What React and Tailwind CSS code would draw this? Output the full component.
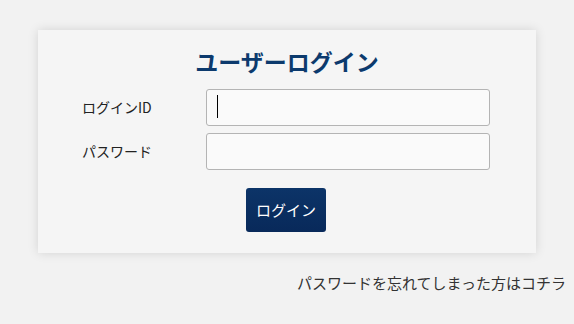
import React from "react";

const jp = { fontFamily: '"Noto Sans CJK JP", "Noto Sans", sans-serif' };

const Field = ({ label, type = "text", caret }) => (
  <div className="flex items-center">
    <label className="w-[124px] text-[14px] text-[#222]">{label}</label>
    <div className="relative flex-1">
      <input
        type={type}
        className="w-full h-[37px] px-[10px] rounded-[3px] border border-[#b4b4b4] bg-[#fafafa] outline-none text-[15px] text-black"
      />
      {caret && <span className="absolute left-[11px] top-[6px] h-[23px] w-px bg-black" />}
    </div>
  </div>
);

export default function App() {
  return (
    <div className="min-h-[324px] bg-[#f2f2f2] pt-[30px]" style={jp}>
      <div className="mx-[38px] bg-[#f5f5f5] shadow-[0_0_10px_rgba(0,0,0,0.13)] pt-[15px] pb-[21px]">
        <h1 className="text-center text-[23px] leading-[32px] font-bold text-[#0c3a6d]">
          ユーザーログイン
        </h1>
        <form className="mt-[12px] pl-[44px] pr-[46px] flex flex-col gap-[7px]">
          <Field label="ログインID" caret />
          <Field label="パスワード" type="password" />
          <div className="flex justify-center mt-[11px]">
            <button
              type="button"
              className="h-[44px] px-[10px] rounded-[3px] bg-gradient-to-b from-[#0c3468] to-[#08295a] text-white text-[15px]"
            >
              ログイン
            </button>
          </div>
        </form>
      </div>
      <div className="flex justify-end pr-[8px] mt-[19px]">
        <a href="#" className="text-[15px] leading-[22px] text-[#333]">
          パスワードを忘れてしまった方はコチラ
        </a>
      </div>
    </div>
  );
}
